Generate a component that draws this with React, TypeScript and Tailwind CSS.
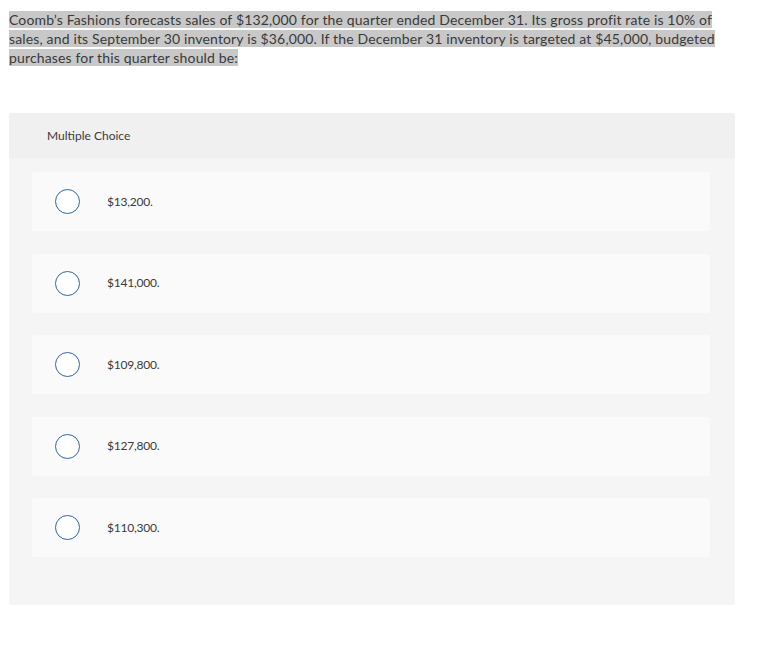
const choices = ["$13,200.", "$141,000.", "$109,800.", "$127,800.", "$110,300."]

export default function App() {
  return (
    <div className="min-h-[656px] w-[763px] bg-white text-[#3a3a3a] [font-family:Lato,'Open_Sans',sans-serif]">
      {/* Question prompt (shown as selected text) */}
      <div className="pl-[9px] pt-[10px] text-[14px] leading-[19px] tracking-[0.15px]">
        <span className="bg-[#c8c8c8]">
          Coomb’s Fashions forecasts sales of $132,000 for the quarter ended December 31. Its gross profit rate is 10% of
          <br />
          sales, and its September 30 inventory is $36,000. If the December 31 inventory is targeted at $45,000, budgeted
          <br />
          purchases for this quarter should be:
        </span>
      </div>

      {/* Answer panel */}
      <div className="ml-[9px] mt-[46px] w-[726px] overflow-hidden rounded-[3px] bg-[#f5f5f5]">
        <div className="flex h-[45px] items-center bg-[#f0f0f0] pl-[38px] text-[12px] text-[#3a3a3a]">
          Multiple Choice
        </div>
        <div className="flex flex-col gap-[22.5px] pb-[48px] pl-[23px] pr-[25px] pt-[14px]">
          {choices.map((c) => (
            <div key={c} className="flex h-[59px] items-center rounded-[3px] bg-[#fafafa]">
              <span className="ml-[23px] h-[25px] w-[25px] rounded-full border-[1.5px] border-[#2d67a3] bg-white" />
              <span className="ml-[27px] text-[12px] tracking-[-0.2px] text-[#3a3a3a]">{c}</span>
            </div>
          ))}
        </div>
      </div>
    </div>
  )
}
